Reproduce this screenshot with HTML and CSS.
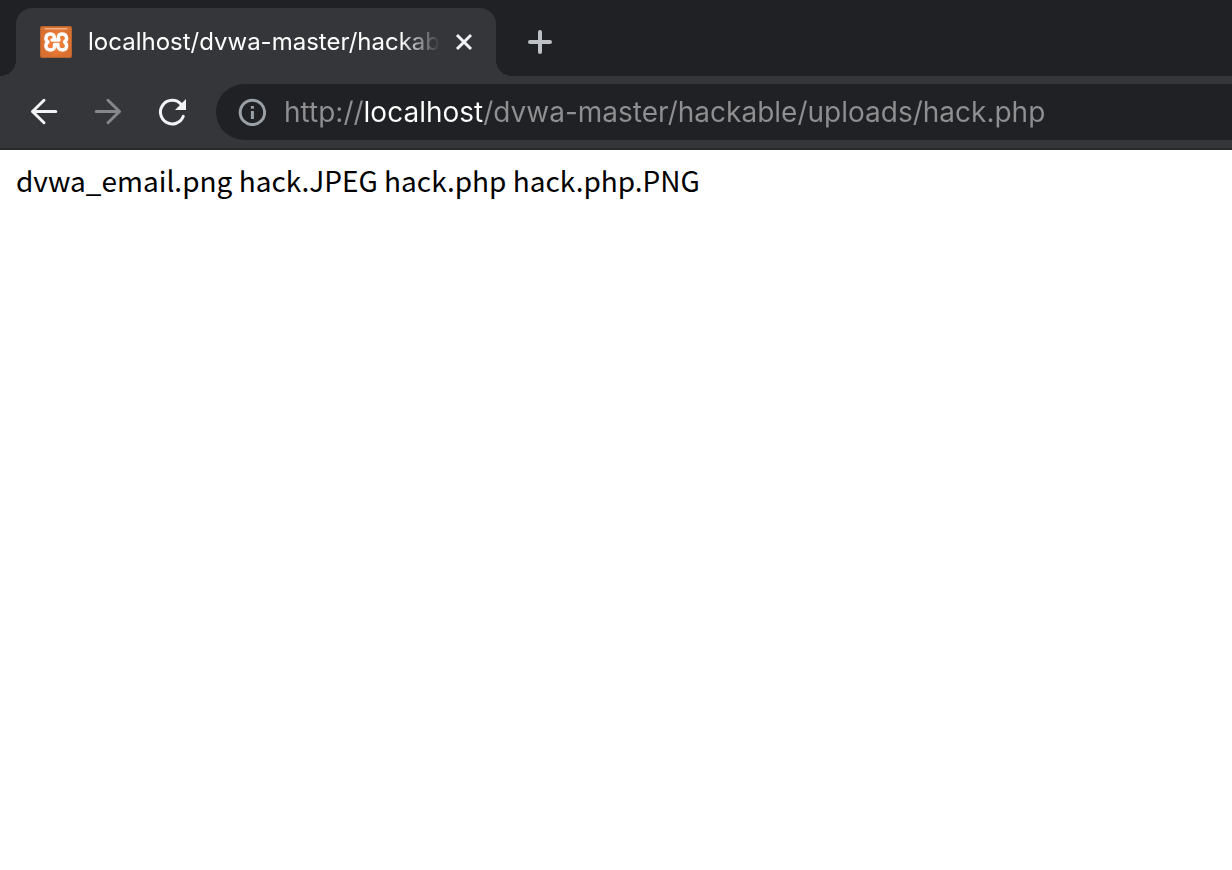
FILE: index.html
```html
<!DOCTYPE html>
<html lang="en">
<head>
<meta charset="utf-8">
<meta name="viewport" content="width=device-width, initial-scale=1">
<title>localhost/dvwa-master/hackable/uploads/hack.php</title>
<link rel="stylesheet" href="styles.css">
</head>
<body>
<header class="browser">
  <div class="tab-strip">
    <div class="tab">
      <svg class="favicon" viewBox="0 0 32 32" aria-hidden="true">
        <defs>
          <radialGradient id="tile"><stop offset="0.5" stop-color="#ed7d38"/><stop offset="1" stop-color="#d96f31"/></radialGradient>
          <linearGradient id="gloss" x1="0" y1="0" x2="0" y2="1"><stop offset="0" stop-color="#f5b891"/><stop offset="1" stop-color="#e68a50"/></linearGradient>
        </defs>
        <rect width="32" height="32" rx="2" fill="#b8642f"/>
        <rect x="1" y="1" width="30" height="30" rx="2" fill="url(#tile)"/>
        <path d="M4 2h24l-2 2H6z" fill="url(#gloss)"/>
        <path d="M12 14H19C17.500 11 18.500 8 22 8C27 8 28 13.500 24.500 16C28 18.500 27 24 22.500 24C18.500 24 17.500 21 18 18.500H14.500C15 21.500 14 24 10.500 24C5.500 24 4.500 18.500 8 16C4.500 13.500 5.500 8 10.500 8C14 8 15 11 14 14" fill="none" stroke="#fff" stroke-width="3.400" stroke-linecap="round" stroke-linejoin="round"/>
      </svg>
      <span class="tab-title">localhost/dvwa-master/hackable/uploads/hack.php</span>
      <button class="tab-close" type="button" aria-label="Close tab">
        <svg viewBox="0 0 24 24"><path d="M5 5l14 14M19 5L5 19"/></svg>
      </button>
    </div>
    <button class="new-tab" type="button" aria-label="New tab">
      <svg viewBox="0 0 24 24"><path d="M12 2v20M2 12h20"/></svg>
    </button>
  </div>
  <nav class="toolbar" aria-label="Navigation">
    <button class="nav-button" type="button" aria-label="Back">
      <svg viewBox="0 0 32 32"><path d="M27.800 15.500H4.500M16 4.300L4.500 15.500 16 26.700"/></svg>
    </button>
    <button class="nav-button nav-forward" type="button" aria-label="Forward">
      <svg viewBox="0 0 32 32"><path d="M4.200 15.500h23.300M16 4.300l11.500 11.200L16 26.700"/></svg>
    </button>
    <button class="nav-button" type="button" aria-label="Reload">
      <svg viewBox="0 0 32 32"><path d="M27.300 20.300A11.800 11.800 0 1 1 25 8.200"/><path class="solid" d="M30 3v11H19z"/></svg>
    </button>
    <div class="address">
      <svg class="info" viewBox="0 0 28 28" aria-hidden="true"><circle cx="14.400" cy="14.400" r="12.200"/><path d="M14.400 13v8M14.400 8v2.700"/></svg>
      <input class="url" type="text" aria-label="Address" spellcheck="false" value="http://localhost/dvwa-master/hackable/uploads/hack.php">
    </div>
  </nav>
</header>
<main class="page">dvwa_email.png hack.JPEG hack.php hack.php.PNG</main>
</body>
</html>
```
FILE: styles.css
```css
* {
  box-sizing: border-box;
}

body {
  margin: 0;
  background: #fff;
}

button {
  display: flex;
  align-items: center;
  justify-content: center;
  padding: 0;
  border: 0;
  background: none;
  color: #f1f3f4;
}

svg {
  display: block;
  flex: none;
  fill: none;
  stroke: currentColor;
  stroke-width: 3;
}

.favicon {
  width: 32px;
  height: 32px;
  stroke: none;
}

.browser {
  background: #35363a;
  border-bottom: 2px solid #292a2b;
  font-family: Inter, "Liberation Sans", sans-serif;
}

.tab-strip {
  display: flex;
  align-items: flex-end;
  height: 76px;
  padding: 8px 16px 0;
  background: #202124;
}

.tab {
  position: relative;
  display: flex;
  align-items: center;
  width: 480px;
  height: 68px;
  padding: 0 20px 0 24px;
  border-radius: 16px 16px 0 0;
  background: #35363a;
  color: #fff;
}

.tab::before,
.tab::after {
  content: "";
  position: absolute;
  bottom: 0;
  width: 16px;
  height: 16px;
}

.tab::before {
  right: 100%;
  background: radial-gradient(circle at 0 0, transparent 16px, #35363a 16px);
}

.tab::after {
  left: 100%;
  background: radial-gradient(circle at 100% 0, transparent 16px, #35363a 16px);
}

.tab-title {
  flex: 1;
  min-width: 0;
  margin-left: 16px;
  overflow: hidden;
  font-size: 24px;
  line-height: 32px;
  white-space: nowrap;
  -webkit-mask-image: linear-gradient(to left, transparent, #000 40px);
  mask-image: linear-gradient(to left, transparent, #000 40px);
}

.tab-close {
  width: 24px;
  height: 24px;
  margin-left: 12px;
}

.tab-close svg,
.new-tab svg {
  width: 24px;
  height: 24px;
}

.new-tab {
  width: 56px;
  height: 68px;
  margin-left: 16px;
  color: #bdc1c6;
}

.new-tab svg {
  stroke-width: 4;
  stroke-linecap: round;
}

.toolbar {
  display: flex;
  align-items: center;
  gap: 32px;
  padding: 8px 0 8px 28px;
}

.nav-button svg {
  width: 32px;
  height: 32px;
  stroke-linecap: round;
  stroke-linejoin: round;
}

.nav-forward {
  color: #86878a;
}

.nav-button .solid {
  fill: currentColor;
  stroke: none;
}

.address {
  display: flex;
  flex: 1;
  align-items: center;
  gap: 18px;
  min-width: 0;
  height: 56px;
  margin-left: -4px;
  padding-left: 22px;
  border-radius: 28px 0 0 28px;
  background: #202124;
}

.info {
  width: 28px;
  height: 28px;
  color: #9aa0a6;
}

.url {
  flex: 1;
  min-width: 0;
  padding: 0;
  border: 0;
  outline: 0;
  background: linear-gradient(to right, #8f8f91 80px, #fff 80px 200px, #8f8f91 200px);
  -webkit-background-clip: text;
  background-clip: text;
  color: transparent;
  caret-color: #fff;
  font: 28px/40px Inter, "Liberation Sans", sans-serif;
}

.page {
  padding: 8px 16px;
  color: #000;
  font: 28px/44px "Noto Sans CJK KR", "Noto Sans", sans-serif;
}
```
